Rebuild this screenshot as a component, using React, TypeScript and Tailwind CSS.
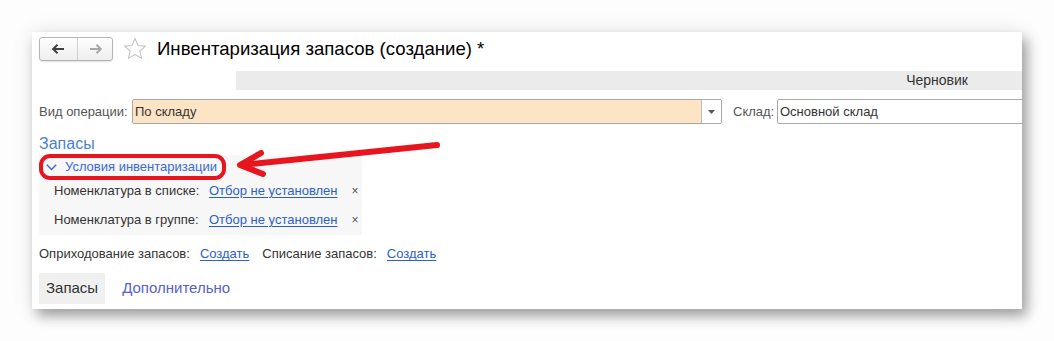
import React from "react";

function NavButtons() {
  return (
    <div className="flex h-6 w-[74px] shrink-0 rounded-[3px] border border-[#b5b5b5] bg-gradient-to-b from-white to-[#eeeeee] shadow-[0_1px_1px_rgba(0,0,0,0.12)]">
      <div className="flex w-[38px] items-center justify-center border-r border-[#cfcfcf]">
        <svg width="13" height="10" viewBox="0 0 13 10">
          <path d="M1 5h11" stroke="#404040" strokeWidth="2" />
          <path d="M5.5 0.8L1.2 5l4.3 4.2" fill="none" stroke="#404040" strokeWidth="2" />
        </svg>
      </div>
      <div className="flex flex-1 items-center justify-center">
        <svg width="13" height="10" viewBox="0 0 13 10">
          <path d="M1 5h11" stroke="#a8a8a8" strokeWidth="2" />
          <path d="M7.5 0.8L11.8 5l-4.3 4.2" fill="none" stroke="#a8a8a8" strokeWidth="2" />
        </svg>
      </div>
    </div>
  );
}

function Star() {
  return (
    <svg width="24" height="24" viewBox="0 0 24 24" className="ml-[10px] shrink-0">
      <path
        d="M12 1.5l3.1 7 7.4.6-5.6 4.9 1.7 7.4L12 17.5l-6.6 3.9 1.7-7.4L1.5 9.1l7.4-.6z"
        fill="none"
        stroke="#c4c4c4"
        strokeWidth="1.1"
        strokeLinejoin="round"
      />
    </svg>
  );
}

function FilterRow({ label }: { label: string }) {
  return (
    <div className="flex h-[29px] items-center text-[13px]">
      <span className="w-[155px] shrink-0 text-[#333]">{label}</span>
      <span className="text-[#2d5fc9] underline underline-offset-2">Отбор не установлен</span>
      <span className="ml-[14px] text-[12px] text-[#555]">×</span>
    </div>
  );
}

export default function App() {
  return (
    <div className="min-h-screen bg-[#fdfdfd] pl-8 pt-8 font-['Liberation_Sans',Arial,sans-serif]">
      <div className="relative h-[277px] w-[990px] overflow-hidden bg-white shadow-[5px_7px_12px_rgba(0,0,0,0.35),0_0_22px_rgba(0,0,0,0.08)]">
        <div className="ml-[7px] mt-[5px] flex h-6 items-center">
          <NavButtons />
          <Star />
          <h1 className="ml-[10px] whitespace-nowrap text-[18.6px] leading-6 text-black">
            Инвентаризация запасов (создание) *
          </h1>
        </div>

        <div className="ml-[204px] mt-[10px] flex h-[19px] items-center justify-end bg-[#ebebeb] pr-[54px] text-[14px] text-[#333]">
          Черновик
        </div>

        <div className="ml-[7px] mt-[9px] flex h-[25px] items-center whitespace-nowrap text-[13px]">
          <span className="w-[93px] shrink-0 text-[#555]">Вид операции:</span>
          <div className="flex h-[25px] w-[590px] shrink-0 rounded-[2px] border border-[#a8a8a8] bg-[#fde4c5]">
            <span className="flex flex-1 items-center pl-[2px] text-[#333]">По складу</span>
            <span className="flex w-[20px] items-center justify-center border-l border-[#bdbdbd] bg-white">
              <svg width="7" height="4" viewBox="0 0 7 4">
                <path d="M0 0h7L3.5 4z" fill="#555" />
              </svg>
            </span>
          </div>
          <span className="ml-[11px] w-[44px] shrink-0 text-[#555]">Склад:</span>
          <div className="flex h-[25px] w-[300px] shrink-0 items-center rounded-[2px] border border-[#a8a8a8] bg-white pl-[2px] text-[#333]">
            Основной склад
          </div>
        </div>

        <div className="ml-[7px] mt-[9px] text-[16px] leading-[21px] text-[#4a7fd0]">Запасы</div>

        <div className="ml-[7px] mt-[1px] w-[323px] bg-[#f7f7f7] pb-[1px]">
          <div className="flex h-[21px] items-center pl-[7px] pt-[3px] text-[13px] text-[#3b6bd0]">
            <svg width="11" height="7" viewBox="0 0 11 7" className="mr-[8px]">
              <path d="M0.8 0.8L5.5 5.6l4.7-4.8" fill="none" stroke="#3b6bd0" strokeWidth="1.4" />
            </svg>
            Условия инвентаризации
          </div>
          <div className="pl-[15px]">
            <FilterRow label="Номенклатура в списке:" />
            <FilterRow label="Номенклатура в группе:" />
          </div>
        </div>

        <div className="ml-[7px] mt-[9px] flex h-[20px] items-center whitespace-nowrap text-[13px]">
          <span className="text-[#333]">Оприходование запасов:</span>
          <span className="ml-[10px] text-[#2d5fc9] underline underline-offset-2">Создать</span>
          <span className="ml-[13px] text-[#333]">Списание запасов:</span>
          <span className="ml-[10px] text-[#2d5fc9] underline underline-offset-2">Создать</span>
        </div>

        <div className="ml-[7px] mt-[9px] flex h-[31px] items-center text-[15px]">
          <span className="flex h-full items-center bg-[#f0f0f0] px-[7px] text-[#333]">Запасы</span>
          <span className="ml-[17px] text-[#5462c9]">Дополнительно</span>
        </div>

        <svg className="pointer-events-none absolute left-0 top-0" width="990" height="277">
          <rect x="9" y="124" width="183" height="22" rx="9" fill="none" stroke="#e8141e" strokeWidth="4" />
          <path
            d="M405 113L209 133M229 121L208 133L231 142"
            fill="none"
            stroke="#e8141e"
            strokeWidth="6"
            strokeLinecap="round"
            strokeLinejoin="round"
          />
        </svg>
      </div>
    </div>
  );
}
